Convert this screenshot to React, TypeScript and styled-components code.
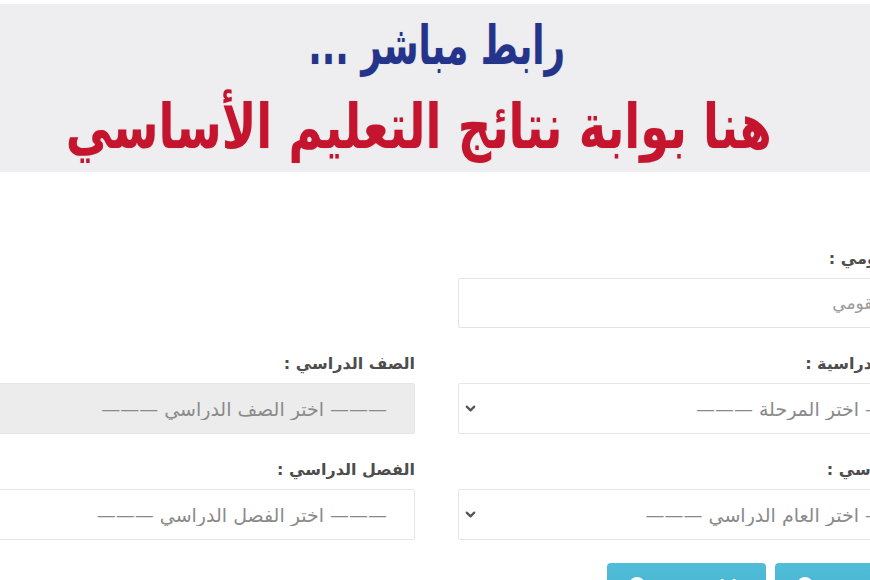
import React from "react";
import styled, { createGlobalStyle } from "styled-components";
import { ChevronDown } from "lucide-react";

const GlobalStyle = createGlobalStyle`
    html, body {
        margin: 0;
        padding: 0;
        height: 580px;
        overflow: hidden;
        background: #ffffff;
        font-family: "DejaVu Sans", "Noto Sans", sans-serif;
    }
`

const Page = styled.div`
    width: 870px;
    height: 580px;
    overflow: hidden;
    padding-top: 4px;
    box-sizing: border-box;
`

const Banner = styled.header`
    height: 168px;
    box-sizing: border-box;
    padding-top: 8px;
    background-color: #eeeef1;
    display: flex;
    flex-direction: column;
    align-items: center;
    gap: 8px;
    direction: rtl;
`

const Title = styled.h1<{ $color: string; $size: number; $shift: number; $squeeze: number }>`
    margin: 0;
    font-family: "DejaVu Sans", sans-serif;
    font-weight: 700;
    font-size: ${p => p.$size}px;
    line-height: 1.25;
    color: ${p => p.$color};
    white-space: nowrap;
    transform: translateX(${p => p.$shift}px) scaleX(${p => p.$squeeze});
    text-shadow: 0 0 2px rgba(0, 0, 0, 0.12);
`

const Form = styled.form`
    width: 1027px;
    margin-left: -77px;
    padding-top: 76px;
    direction: rtl;
    display: grid;
    grid-template-columns: 1fr 1fr;
    column-gap: 43px;
    row-gap: 25px;
`

const Field = styled.div`
    display: flex;
    flex-direction: column;
    gap: 8px;
`

const Label = styled.label`
    font-size: 16px;
    line-height: 22px;
    font-weight: 700;
    color: #4d4d4d;
    white-space: nowrap;
`

const TextInput = styled.input`
    height: 50px;
    box-sizing: border-box;
    border: 1px solid #e3e3e6;
    border-radius: 2px;
    padding: 0 22px;
    font-family: inherit;
    font-size: 17px;
    color: #444;
    background: #fff;
    direction: rtl;

    &::placeholder {
        color: #9a9a9a;
    }
`

const SelectWrap = styled.div`
    position: relative;
`

const Select = styled.select<{ $locked?: boolean }>`
    appearance: none;
    width: 100%;
    height: 51px;
    box-sizing: border-box;
    border: 1px solid #e6e6e8;
    border-radius: 2px;
    padding: 0 27px 0 40px;
    font-family: inherit;
    font-size: 19px;
    color: #8a8a8a;
    background: ${p => (p.$locked ? "#ececed" : "#ffffff")};
    direction: rtl;
    opacity: 1;
`

const Chevron = styled.span`
    position: absolute;
    left: 2px;
    top: 50%;
    transform: translateY(-50%);
    width: 20px;
    height: 20px;
    display: flex;
    align-items: center;
    justify-content: center;
    color: #555;
    pointer-events: none;
`

const Spacer = styled.div``

const ButtonRow = styled.div`
    grid-column: 1 / -1;
    display: flex;
    gap: 9px;
    padding-right: 16px;
    margin-top: -2px;
`

const Button = styled.button`
    width: 159px;
    height: 44px;
    border: 0;
    border-radius: 4px;
    background: linear-gradient(#52bdd8, #42b0cc);
    color: #fff;
    font-family: inherit;
    font-size: 14px;
    font-weight: 700;
    display: flex;
    flex-direction: row-reverse;
    align-items: center;
    justify-content: space-between;
    padding: 0 22px;
`

const Icon = styled.span`
    width: 16px;
    height: 16px;
    border-radius: 50%;
    border: 3px solid #ffffff;
    box-sizing: border-box;
`

const dash = "———"

type SelectProps = { label: string; text: string; locked?: boolean }

const SelectField = ({ label, text, locked }: SelectProps) => (
    <Field>
        <Label>{label}</Label>
        <SelectWrap>
            <Select $locked={locked} disabled={locked} defaultValue="">
                <option value="">{`${dash} ${text} ${dash}`}</option>
            </Select>
            <Chevron>
                <ChevronDown size={15} strokeWidth={3.5} />
            </Chevron>
        </SelectWrap>
    </Field>
)

const App = () => {
    return (
        <Page>
            <GlobalStyle />
            <Banner>
                <Title $color="#25348b" $size={54} $shift={2} $squeeze={0.66}>رابط مباشر ...</Title>
                <Title $color="#c5142e" $size={62} $shift={-16} $squeeze={0.75}>هنا بوابة نتائج التعليم الأساسي</Title>
            </Banner>
            <Form>
                <Field>
                    <Label>الرقم القومي :</Label>
                    <TextInput placeholder="الرقم القومي" />
                </Field>
                <Spacer />
                <SelectField label="المرحلة الدراسية :" text="اختر المرحلة" />
                <SelectField label="الصف الدراسي :" text="اختر الصف الدراسي" locked />
                <SelectField label="العام الدراسي :" text="اختر العام الدراسي" />
                <SelectField label="الفصل الدراسي :" text="اختر الفصل الدراسي" />
                <ButtonRow>
                    <Button type="button"><Icon />بحث</Button>
                    <Button type="button"><Icon />طباعة</Button>
                </ButtonRow>
            </Form>
        </Page>
    )
}

export default App;
